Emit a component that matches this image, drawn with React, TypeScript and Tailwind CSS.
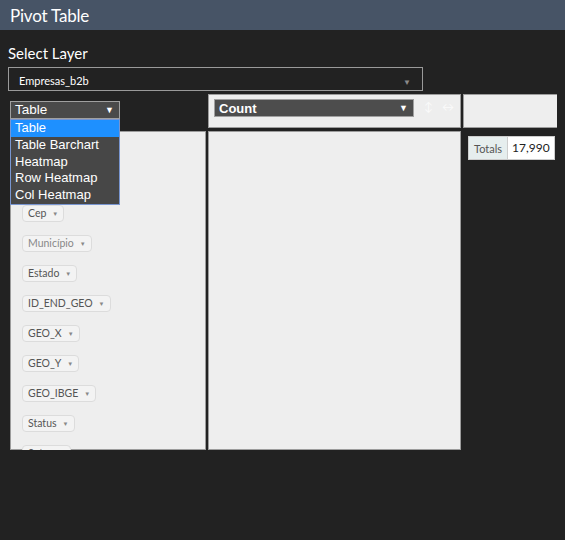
import React from 'react';

// the first attributes of the list sit behind the open renderer menu
const fields = ['Cep', 'Município', 'Estado', 'ID_END_GEO', 'GEO_X', 'GEO_Y', 'GEO_IBGE', 'Status', 'Setor'];

const renderers = ['Table', 'Table Barchart', 'Heatmap', 'Row Heatmap', 'Col Heatmap'];

const App: React.FC = () => {
  return (
    <div className="w-[565px] h-[540px] bg-[#222222] font-['Lato',sans-serif] overflow-hidden">
      {/* Header */}
      <div className="h-[30px] bg-[#475466] px-[10px] flex items-center">
        <span className="text-white text-[17px] leading-none tracking-[-0.2px]">Pivot Table</span>
      </div>

      <div className="px-[8px]">
        <div className="mt-[14px] h-[18px] text-[15px] leading-[18px] text-white">Select Layer</div>

        {/* Layer select */}
        <div className="mt-[5px] w-[415px] h-[24px] border border-[#9a9a9a] flex items-end justify-between pl-[10px] pr-[11px] pb-[4px]">
          <span className="text-[11px] leading-none text-white">Empresas_b2b</span>
          <span className="text-[8px] leading-none text-[#8a8a8a]">▼</span>
        </div>

        {/* Pivot table */}
        <div className="mt-[3px] ml-[2px] h-[356px] overflow-hidden grid grid-cols-[196px_253px_95px] grid-rows-[34px_319px] gap-x-[2px] gap-y-[3px]">
          {/* Renderer select */}
          <div className="relative pt-[7px]">
            <div className="relative z-10 w-[110px] h-[18px] bg-[#4a4a4a] border border-[#a0a0a0] flex items-center justify-between pl-[4px] pr-[5px] font-['Liberation_Sans',Arial,sans-serif]">
              <span className="text-[13.5px] leading-none text-white">Table</span>
              <span className="text-[9px] leading-none text-white">▼</span>
            </div>
            <div className="absolute z-20 left-0 top-[25px] w-[110px] bg-[#474747] border border-[#7895d0] font-['Liberation_Sans',Arial,sans-serif]">
              {renderers.map((r, i) => (
                <div
                  key={r}
                  className={`h-[16.8px] px-[4px] text-[13px] leading-[16.8px] text-white ${i === 0 ? 'bg-[#1e90ff]' : ''}`}
                >
                  {r}
                </div>
              ))}
            </div>
          </div>

          {/* Aggregator */}
          <div className="bg-[#eeeeee] border border-[#9c9c9c] flex items-start pl-[5px] pt-[4px]">
            <div className="w-[200px] h-[18px] bg-[#4d4d4d] border border-[#a0a0a0] flex items-center justify-between pl-[4px] pr-[5px] font-['Liberation_Sans',Arial,sans-serif]">
              <span className="text-[13px] leading-none text-white font-bold">Count</span>
              <span className="text-[9px] leading-none text-white">▼</span>
            </div>
            <span className="ml-[10px] mt-[2px] text-[12px] leading-none text-[#fafafa]">↕</span>
            <span className="ml-[9px] mt-[2px] text-[12px] leading-none text-[#fafafa]">↔</span>
          </div>

          {/* Column attributes */}
          <div className="bg-[#eeeeee] border border-[#9c9c9c]" />

          {/* Unused attributes */}
          <div className="bg-[#eeeeee] border border-[#9c9c9c] pl-[11px] pt-[73px] flex flex-col items-start gap-[13px]">
            {fields.map((f, i) => (
              <div
                key={f}
                className="h-[17px] shrink-0 bg-[#f3f3f3] border border-[#dcdcdc] rounded-[4px] px-[5px] flex items-center gap-[6px]"
              >
                <span className={`text-[10.5px] leading-none ${i === 1 ? 'text-[#888888]' : 'text-[#555555]'}`}>{f}</span>
                <span className="text-[6px] leading-none text-[#888888]">▼</span>
              </div>
            ))}
          </div>

          {/* Rows / output */}
          <div className="bg-[#eeeeee] border border-[#9c9c9c]" />

          <div className="pl-[5px] pt-[5px]">
            <div className="flex h-[24px] border border-[#cdcdcd] w-fit">
              <div className="bg-[#e6eeee] px-[5px] flex items-center border-r border-[#cdcdcd]">
                <span className="text-[11px] leading-none text-[#555555]">Totals</span>
              </div>
              <div className="bg-white px-[4px] flex items-center">
                <span className="text-[12px] leading-none text-[#222222]">17,990</span>
              </div>
            </div>
          </div>
        </div>
      </div>
    </div>
  );
};

export default App;
